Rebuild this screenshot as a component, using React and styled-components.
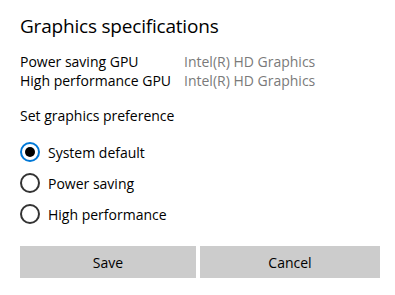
import { useState } from "react";
import styled, { createGlobalStyle } from "styled-components";

const GlobalStyle = createGlobalStyle`
  body {
    margin: 0;
    background: #ffffff;
    font-family: "Open Sans", "Noto Sans", sans-serif;
    color: #000000;
  }
`;

const Page = styled.div`
  width: 395px;
  height: 295px;
  box-sizing: border-box;
  padding: 12px 15px 0 20px;
  display: flex;
  flex-direction: column;
  font-size: 14px;
  line-height: 19px;
`;

const Title = styled.h2`
  margin: 0;
  font-size: 19px;
  font-weight: 400;
  line-height: 28px;
  letter-spacing: -0.2px;
`;

const SpecGrid = styled.div`
  margin-top: 12px;
  display: grid;
  grid-template-columns: 164px auto;
`;

const SpecLabel = styled.span`
  color: #000000;
`;

const SpecValue = styled.span`
  color: #7a7a7a;
`;

const Section = styled.div`
  margin-top: 16px;
`;

const RadioList = styled.div`
  margin-top: 17px;
  display: flex;
  flex-direction: column;
  gap: 11px;
`;

const RadioRow = styled.label`
  display: flex;
  align-items: center;
  gap: 8px;
  height: 20px;
  cursor: pointer;
`;

const Circle = styled.span`
  flex: none;
  width: 20px;
  height: 20px;
  box-sizing: border-box;
  border-radius: 50%;
  border: 2px solid ${(p) => (p.$checked ? "#0078d7" : "#333333")};
  display: flex;
  align-items: center;
  justify-content: center;
  &::after {
    content: "";
    width: 10px;
    height: 10px;
    border-radius: 50%;
    background: #000000;
    display: ${(p) => (p.$checked ? "block" : "none")};
  }
`;

const Buttons = styled.div`
  margin-top: 22px;
  display: grid;
  grid-template-columns: 176px 180px;
  gap: 4px;
`;

const Button = styled.button`
  height: 32px;
  border: none;
  background: #cccccc;
  font-family: inherit;
  font-size: 14px;
  color: #000000;
  padding: 0;
  cursor: pointer;
`;

const options = ["System default", "Power saving", "High performance"];

export default function App() {
  let [choice, setChoice] = useState(0);

  return (
    <>
      <GlobalStyle />
      <Page>
        <Title>Graphics specifications</Title>
        <SpecGrid>
          <SpecLabel>Power saving GPU</SpecLabel>
          <SpecValue>Intel(R) HD Graphics</SpecValue>
          <SpecLabel>High performance GPU</SpecLabel>
          <SpecValue>Intel(R) HD Graphics</SpecValue>
        </SpecGrid>
        <Section>Set graphics preference</Section>
        <RadioList>
          {options.map((o, i) => (
            <RadioRow key={o} onClick={() => setChoice(i)}>
              <Circle $checked={choice === i} />
              {o}
            </RadioRow>
          ))}
        </RadioList>
        <Buttons>
          <Button>Save</Button>
          <Button>Cancel</Button>
        </Buttons>
      </Page>
    </>
  );
}
